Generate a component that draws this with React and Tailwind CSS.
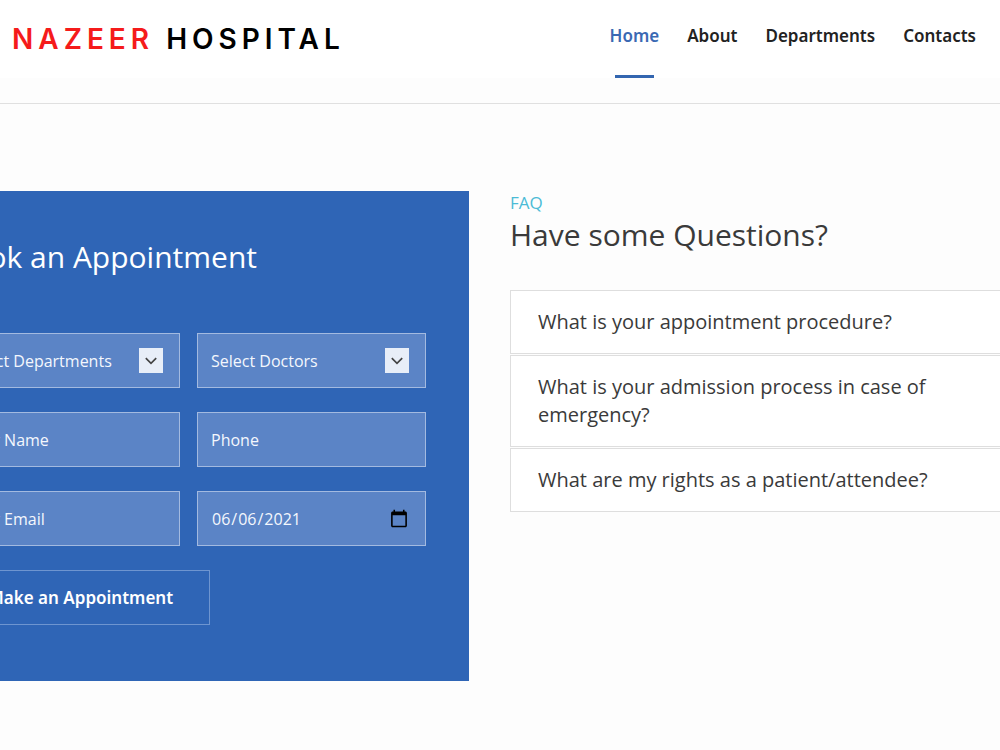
import { useState } from "react";

const navLinks = ["Home", "About", "Departments", "Contacts"];

const questions = [
  "What is your appointment procedure?",
  "What is your admission process in case of emergency?",
  "What are my rights as a patient/attendee?",
];

const fieldClass =
  "h-[55px] w-full border border-[#a3bae0] bg-[#5b84c6] px-[13px] text-base text-[#f4f7fd] outline-none placeholder:text-[#f4f7fd] placeholder:opacity-100";

const SelectField = ({ label }) => (
  <div className="relative">
    <select aria-label={label} className={`${fieldClass} appearance-none`}>
      <option>{label}</option>
    </select>
    <span className="pointer-events-none absolute inset-y-0 right-[17px] flex items-center">
      <span className="flex h-[25px] w-6 items-center justify-center bg-[#e8eef8]">
        <svg
          viewBox="0 0 12 8"
          className="h-2 w-3 fill-none stroke-[#444] stroke-[1.7]"
        >
          <path d="M0.8 1.2 L6 6.4 L11.2 1.2" />
        </svg>
      </span>
    </span>
  </div>
);

const Header = () => (
  <header className="flex h-[78px] items-start justify-between bg-white pr-6 pl-3">
    <a
      href="#home"
      className="pt-5 font-['Inter'] text-[28px] leading-[38px] font-semibold tracking-[5px] text-black"
    >
      <span className="text-[#f51b1b]">NAZEER</span> HOSPITAL
    </a>
    <nav className="flex h-full gap-7 font-['Noto_Sans',sans-serif] text-[17px] leading-6 font-semibold text-[#222]">
      {navLinks.map((link) => (
        <a
          key={link}
          href={`#${link.toLowerCase()}`}
          className={
            link === "Home"
              ? "flex flex-col justify-between pt-6 text-[#3a69b3] after:mx-[5px] after:h-[3px] after:bg-[#3366b0]"
              : "pt-6"
          }
        >
          {link}
        </a>
      ))}
    </nav>
  </header>
);

const AppointmentForm = () => {
  const [date, setDate] = useState("2021-06-06");

  return (
    <section className="bg-[#2f65b6] px-[43px] pt-[46px] pb-14 text-white">
      <h2 className="text-[30px] leading-10">Book an Appointment</h2>
      <form
        className="pt-14"
        onSubmit={(e) => e.preventDefault()}
      >
        <div className="grid grid-cols-2 gap-x-[17px] gap-y-6">
          <SelectField label="Select Departments" />
          <SelectField label="Select Doctors" />
          <input
            type="text"
            aria-label="Your Name"
            placeholder="Your Name"
            className={fieldClass}
          />
          <input
            type="tel"
            aria-label="Phone"
            placeholder="Phone"
            className={fieldClass}
          />
          <input
            type="email"
            aria-label="Your Email"
            placeholder="Your Email"
            className={fieldClass}
          />
          <input
            type="date"
            aria-label="Appointment date"
            value={date}
            onChange={(e) => setDate(e.target.value)}
            className={`${fieldClass} [&::-webkit-calendar-picker-indicator]:mr-[3px] [&::-webkit-calendar-picker-indicator]:size-5 [&::-webkit-calendar-picker-indicator]:p-0`}
          />
        </div>
        <button
          type="submit"
          className="mt-6 h-[55px] border border-[#6e95d0] px-9 font-['Noto_Sans',sans-serif] text-[17px] font-semibold"
        >
          Make an Appointment
        </button>
      </form>
    </section>
  );
};

const Faq = () => (
  <section className="text-[#3a3a3a]">
    <p className="text-[17px] leading-6 text-[#4bbbd6]">FAQ</p>
    <h2 className="text-[30px] leading-10">Have some Questions?</h2>
    <div className="mt-[35px] flex flex-col gap-px">
      {questions.map((question) => (
        <button
          key={question}
          type="button"
          className="border border-[#dedede] bg-white py-[17px] pr-[120px] pl-[27px] text-left text-xl leading-7"
        >
          {question}
        </button>
      ))}
    </div>
  </section>
);

const App = () => {
  return (
    <div className="min-h-screen overflow-x-clip bg-[#fdfdfd] font-['Open_Sans',sans-serif]">
      <Header />
      <div className="h-[26px] border-b border-[#e0e0e0]" />
      <main className="-mx-[92px] grid grid-cols-[561fr_582fr] items-start gap-[41px] pt-[87px] pb-[69px]">
        <AppointmentForm />
        <Faq />
      </main>
    </div>
  );
};

export default App;
